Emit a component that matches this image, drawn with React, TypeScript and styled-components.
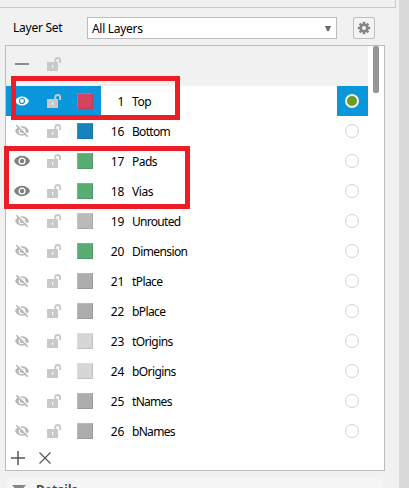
import React from "react";
import styled, { createGlobalStyle } from "styled-components";

const GlobalStyle = createGlobalStyle`
  * { box-sizing: border-box; }
  body { margin: 0; background: #f1f1f1; overflow: hidden; }
`;

const Window = styled.div`
  position: relative;
  display: flex;
  width: 409px;
  height: 488px;
  overflow: hidden;
  background: #f1f1f1;
  font: 12px/16px "Noto Sans", "Open Sans", sans-serif;
  color: #000;
`;
const Panel = styled.main`
  width: 399px;
  display: flex;
  flex-direction: column;
`;
const Gutter = styled.div`
  width: 10px;
  background: #d9d9d9;
`;
const PanelAbove = styled.div`
  width: 396px;
  height: 8px;
  flex: none;
  border: solid #c9c9c9;
  border-width: 0 1px 1px 0;
`;
const Toolbar = styled.div`
  display: flex;
  align-items: center;
  height: 22px;
  margin-top: 9px;
  padding-left: 13px;
  flex: none;
`;
const Text = styled.span<{ $spacing?: number }>`
  letter-spacing: ${(p) => p.$spacing ?? 0}px;
  white-space: nowrap;
`;
const Label = styled.div`
  width: 74px;
`;
const Select = styled.div`
  width: 250px;
  height: 22px;
  display: flex;
  align-items: center;
  justify-content: space-between;
  padding: 1px 5px 0 4px;
  border: 1px solid #bcbcbc;
  background: #fff;
`;
const SelectArrow = styled.svg`
  margin-top: -1px;
`;
const GearButton = styled.button`
  width: 22px;
  height: 22px;
  margin-left: 16px;
  padding: 0;
  display: grid;
  place-items: center;
  border: 1px solid #bebebe;
  border-radius: 2px;
  background: #f4f4f4;
`;
const List = styled.section`
  width: 380px;
  height: 426px;
  margin: 6px 0 0 5px;
  flex: none;
  display: flex;
  flex-direction: column;
  border: 1px solid #bcbcbc;
  background: #fff;
`;
const Scroller = styled.div`
  display: flex;
`;
const Rows = styled.div`
  width: 362px;
`;
const Track = styled.div`
  padding-left: 5px;
`;
const Thumb = styled.div`
  width: 6px;
  height: 47px;
  border-radius: 2px;
  background: #959696;
`;
const columns = "31px 32px 32px 23px 1fr 31px";
const Header = styled.div`
  display: grid;
  grid-template-columns: ${columns};
  height: 40px;
  padding-bottom: 4px;
  background: #f1f1f1;
`;
const Row = styled.div`
  display: grid;
  grid-template-columns: ${columns};
  height: 30px;
`;
const Cell = styled.div<{ $selected?: boolean; $inset?: number }>`
  display: flex;
  align-items: center;
  justify-content: center;
  padding-left: ${(p) => p.$inset ?? 1}px;
  background: ${(p) => (p.$selected ? "#0996da" : "transparent")};
`;
const Swatch = styled.div<{ $color: string }>`
  width: 16px;
  height: 16px;
  background: ${(p) => p.$color};
  border: 1px solid;
  border-color: rgba(255, 255, 255, 0.15) rgba(0, 0, 0, 0.1) rgba(0, 0, 0, 0.1) rgba(255, 255, 255, 0.15);
`;
const NumberCell = styled.div`
  padding-top: 8px;
  text-align: right;
`;
const NameCell = styled.div`
  padding: 8px 0 0 8px;
`;
const Radio = styled.div<{ $on?: boolean }>`
  width: 14px;
  height: 14px;
  margin-right: 2px;
  border: ${(p) => (p.$on ? "2px solid #f2f2ec" : "1px solid #d4d4d4")};
  border-radius: 50%;
  background: ${(p) => (p.$on ? "#6b9a24" : "#fff")};
`;
const Actions = styled.div`
  display: flex;
  align-items: center;
  gap: 14px;
  height: 24px;
  padding-left: 5px;
`;
const Details = styled.div`
  display: flex;
  gap: 10px;
  height: 11px;
  width: 376px;
  flex: none;
  margin: 6px 0 0 7px;
  padding: 5px 0 0 5px;
  background: #f5f5f5;
  color: #45474f;
  font-weight: 700;
`;
const Arrow = styled.svg`
  flex: none;
  margin-top: 3px;
`;
const Highlight = styled.div<{ $x: number; $y: number; $w: number; $h: number }>`
  position: absolute;
  left: ${(p) => p.$x}px;
  top: ${(p) => p.$y}px;
  width: ${(p) => p.$w}px;
  height: ${(p) => p.$h}px;
  border: 5px solid #ee1c25;
`;

const Lock = () => (
  <svg width="16" height="16" viewBox="0 0 16 16">
    <path d="M9.300 7V4.300a2.400 2.400 0 0 1 4.800 0V7" fill="none" stroke="#c9c9c9" strokeWidth="2" />
    <path fill="#c9c9c9" d="M1 6h11v9H1z" />
    <path fill="#f4f4f4" d="M6 9h1.200v3H6z" />
  </svg>
);
const Eye = ({ color, hole, size = 16 }: { color: string; hole: string; size?: number }) => (
  <svg width={size} height="12" viewBox="0 0 16 12">
    <path fill={color} d="M0 6C1.4 2.8 4.5.8 8 .8S14.600 2.800 16 6C14.600 9.200 11.500 11.200 8 11.200S1.400 9.200 0 6z" />
    <circle cx="8" cy="6" r="2.900" fill={color} stroke={hole} strokeWidth="1.300" />
  </svg>
);
const HiddenEye = () => (
  <svg width="16" height="14" viewBox="0 0 16 14">
    <path fill="#b8b8b8" d="M1 7C2.300 4.100 4.800 2.300 8 2.300S13.700 4.100 15 7C13.700 9.900 11.200 11.700 8 11.700S2.300 9.900 1 7z" />
    <circle cx="8" cy="7" r="2.700" fill="#b8b8b8" stroke="#fff" strokeWidth="1.100" />
    <path d="M3.600.8 15 12.200" stroke="#fff" strokeWidth="1.300" />
    <path d="M2.300 1.300 13.700 12.700" stroke="#b4b4b4" strokeWidth="1.500" />
  </svg>
);
const Gear = () => (
  <svg width="14" height="14" viewBox="-7 -7 14 14">
    {[0, 45, 90, 135].map((a) => (
      <rect key={a} x="-1.300" y="-6.200" width="2.600" height="12.400" fill="#858585" transform={`rotate(${a})`} />
    ))}
    <circle r="4.500" fill="#858585" />
    <circle r="2" fill="#f4f4f4" />
  </svg>
);

interface Layer {
  id: number;
  name: string;
  color: string;
  visible?: boolean;
  selected?: boolean;
  spacing: number;
}
const layers: Layer[] = [
  { id: 1, name: "Top", color: "#d6435f", visible: true, selected: true, spacing: -0.4 },
  { id: 16, name: "Bottom", color: "#1783bc", spacing: -0.7 },
  { id: 17, name: "Pads", color: "#5aad72", visible: true, spacing: -0.5 },
  { id: 18, name: "Vias", color: "#5aad72", visible: true, spacing: -0.4 },
  { id: 19, name: "Unrouted", color: "#bababa", spacing: -0.7 },
  { id: 20, name: "Dimension", color: "#5aad72", spacing: -0.6 },
  { id: 21, name: "tPlace", color: "#adadad", spacing: -0.6 },
  { id: 22, name: "bPlace", color: "#adadad", spacing: -0.6 },
  { id: 23, name: "tOrigins", color: "#d6d6d6", spacing: -0.6 },
  { id: 24, name: "bOrigins", color: "#d6d6d6", spacing: -0.6 },
  { id: 25, name: "tNames", color: "#adadad", spacing: -0.7 },
  { id: 26, name: "bNames", color: "#adadad", spacing: -0.7 },
];

const LayerRow = ({ layer }: { layer: Layer }) => (
  <Row>
    <Cell $selected={layer.selected}>
      {layer.selected ? (
        <Eye color="#fff" hole="#0996da" size={14} />
      ) : layer.visible ? (
        <Eye color="#808080" hole="#fff" />
      ) : (
        <HiddenEye />
      )}
    </Cell>
    <Cell $selected={layer.selected} $inset={2}><Lock /></Cell>
    <Cell $selected={layer.selected} $inset={0}><Swatch $color={layer.color} /></Cell>
    <NumberCell><Text $spacing={-0.3}>{layer.id}</Text></NumberCell>
    <NameCell><Text $spacing={layer.spacing}>{layer.name}</Text></NameCell>
    <Cell $selected={layer.selected}><Radio $on={layer.selected} /></Cell>
  </Row>
);

export default function App() {
  return (
    <Window>
      <GlobalStyle />
      <Panel>
        <PanelAbove />
        <Toolbar>
          <Label><Text $spacing={-0.25}>Layer Set</Text></Label>
          <Select>
            <Text $spacing={-0.3}>All Layers</Text>
            <SelectArrow width="6" height="5"><path d="M0 0h6L3.800 5H2.200z" fill="#666" /></SelectArrow>
          </Select>
          <GearButton aria-label="Layer settings"><Gear /></GearButton>
        </Toolbar>
        <List>
          <Scroller>
            <Rows>
              <Header>
                <Cell><svg width="14" height="2"><path d="M0 0h14v2H0z" fill="#8a8a8a" /></svg></Cell>
                <Cell $inset={2}><Lock /></Cell>
              </Header>
              {layers.map((l) => <LayerRow key={l.id} layer={l} />)}
            </Rows>
            <Track><Thumb /></Track>
          </Scroller>
          <Actions>
            <svg width="14" height="14"><path d="M0 7h14M7 0v14" stroke="#555" strokeWidth="1.500" /></svg>
            <svg width="12" height="12"><path d="M.500.500 11.500 11.500M11.500.500.500 11.500" stroke="#555" strokeWidth="1.200" /></svg>
          </Actions>
        </List>
        <Details>
          <Arrow width="14" height="8"><path d="M0 0h14L7 8z" fill="#858585" /></Arrow>
          <Text>Details</Text>
        </Details>
      </Panel>
      <Gutter />
      <Highlight $x={11} $y={76} $w={169} $h={44} />
      <Highlight $x={4} $y={146} $w={186} $h={63} />
    </Window>
  );
}
